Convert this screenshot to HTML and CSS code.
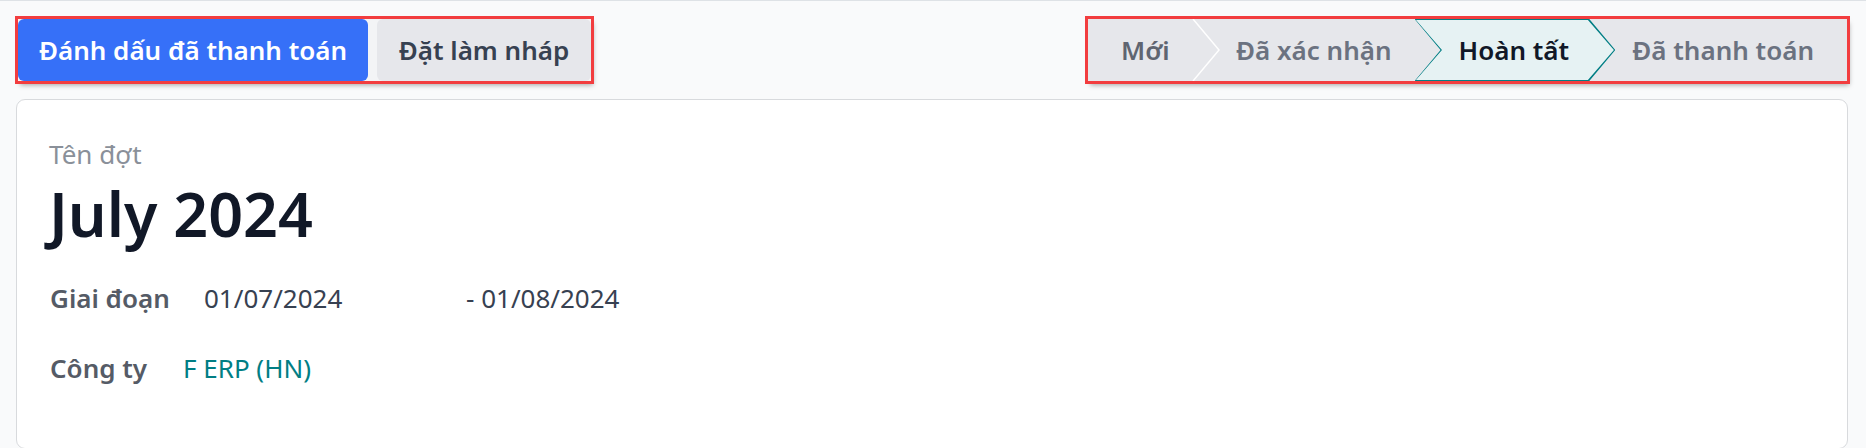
FILE: index.html
```html
<!DOCTYPE html>
<html lang="vi">
<head>
<meta charset="utf-8">
<title>July 2024</title>
<link rel="stylesheet" href="styles.css">
</head>
<body>
<div class="page">
  <div class="control-panel">
    <div class="btn-group annotated">
      <button class="btn btn-primary">Đánh dấu đã thanh toán</button>
      <button class="btn btn-secondary">Đặt làm nháp</button>
    </div>
    <div class="statusbar annotated">
      <div class="stage stage-first sep">
        <span>Mới</span>
        <svg class="chev" width="28" height="62" viewBox="0 0 28 62"><polyline points="1,0 27,31 1,62" fill="none" stroke="#ffffff" stroke-width="1.5"/></svg>
      </div>
      <div class="stage">Đã xác nhận</div>
      <div class="stage stage-current"><div class="stage-current-inner">Hoàn tất</div></div>
      <div class="stage stage-last">Đã thanh toán</div>
    </div>
  </div>
  <div class="sheet">
    <div class="title-label">Tên đợt</div>
    <h1 class="title">July 2024</h1>
    <div class="fields">
      <div class="field-label">Giai đoạn</div>
      <div class="field-value daterange"><span class="date-start">01/07/2024</span><span class="date-end">- 01/08/2024</span></div>
      <div class="field-label">Công ty</div>
      <div class="field-value link">F ERP (HN)</div>
    </div>
  </div>
</div>
</body>
</html>
```

FILE: styles.css
```css
html, body {
  margin: 0;
  padding: 0;
  background: #f9fafb;
}
body {
  font-family: "Noto Sans", "Open Sans", sans-serif;
  font-size: 26px;
  color: #374151;
  height: 448px;
  overflow: hidden;
}
.page {
  border-top: 1px solid #dee2e6;
  display: flex;
  flex-direction: column;
  gap: 18px;
}
.control-panel {
  display: flex;
  justify-content: space-between;
  align-items: flex-start;
  padding: 18px 19px 0 18px;
}
.annotated {
  outline: 3px solid #f23d3f;
  box-shadow: 2px 4px 5px rgba(0, 0, 0, 0.35);
}
.btn-group {
  display: flex;
  gap: 9px;
  background: #f3f4f6;
}
.btn {
  font-family: inherit;
  font-size: 26px;
  font-weight: 600;
  height: 62px;
  border: 0;
  border-radius: 6px;
  padding: 0 20px;
  line-height: 62px;
  cursor: pointer;
  white-space: nowrap;
}
.btn-primary {
  background: #3670f8;
  color: #ffffff;
  width: 350px;
}
.btn-secondary {
  background: #e6e7eb;
  color: #374151;
  width: 214px;
}
.statusbar {
  display: flex;
  height: 62px;
  background: #e6e7eb;
  width: 759px;
}
.stage {
  position: relative;
  display: flex;
  align-items: center;
  height: 62px;
  padding: 0 23px 0 43px;
  font-weight: 600;
  color: #6b7280;
  white-space: nowrap;
  box-sizing: border-box;
}
.stage-first {
  padding-left: 33px;
  padding-right: 24px;
  width: 105px;
  color: #5f6571;
}
.stage-first .chev {
  position: absolute;
  right: -27px;
  top: 0;
  z-index: 2;
}
.stage-current {
  width: 203px;
  margin-right: -26px;
  padding: 1px 0;
  background: #017e84;
  z-index: 1;
  clip-path: polygon(0 0, calc(100% - 26px) 0, 100% 50%, calc(100% - 26px) 100%, 0 100%, 26px 50%);
}
.stage-current-inner {
  display: flex;
  align-items: center;
  width: 100%;
  height: 100%;
  box-sizing: border-box;
  padding: 0 24px 0 44px;
  background: #e6f2f3;
  color: #111827;
  clip-path: polygon(1.4px 0, calc(100% - 27.4px) 0, calc(100% - 1.4px) 50%, calc(100% - 27.4px) 100%, 1.4px 100%, 27.4px 50%);
}
.stage-last {
  flex: 1;
  padding-right: 33px;
}
.sheet {
  margin: 0 18px 0 16px;
  background: #ffffff;
  border: 1px solid #d8dadd;
  border-radius: 9px;
  padding: 40px 32px 60px 32px;
  min-height: 248px;
}
.title-label {
  line-height: 28px;
  color: #8a9099;
}
.title {
  margin: 4px 0 0 0;
  font-size: 61px;
  font-weight: 600;
  line-height: 83px;
  color: #111827;
}
.fields {
  margin-top: 25px;
  display: grid;
  grid-template-columns: 134px auto;
  row-gap: 34px;
  line-height: 36px;
}
.field-label {
  font-weight: 600;
  color: #555b66;
  padding-left: 1px;
}
.daterange {
  display: flex;
}
.date-start {
  width: 262px;
  padding-left: 21px;
}
.link {
  color: #017e84;
}
```
